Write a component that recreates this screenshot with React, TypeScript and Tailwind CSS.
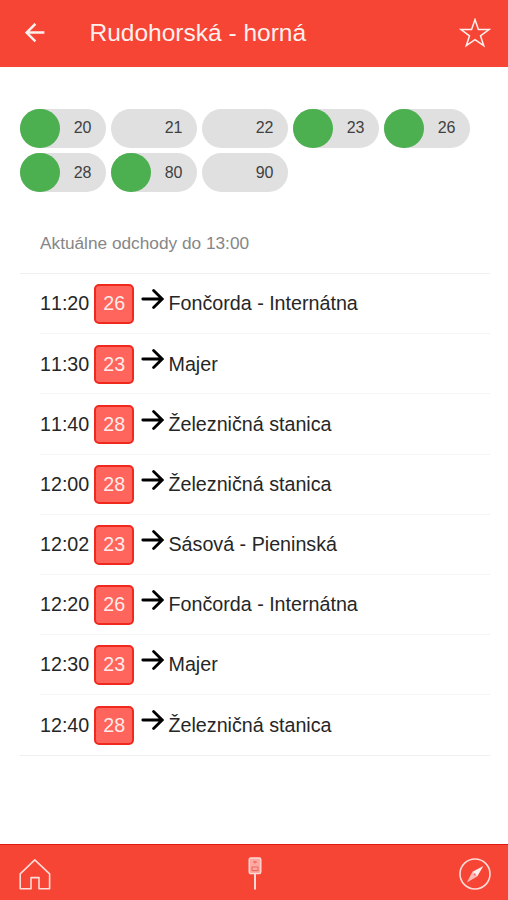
import { useState } from 'react';

interface Line {
  number: string;
  active: boolean;
}

interface Departure {
  time: string;
  line: string;
  direction: string;
}

const initialLines: Line[] = [
  { number: '20', active: true },
  { number: '21', active: false },
  { number: '22', active: false },
  { number: '23', active: true },
  { number: '26', active: true },
  { number: '28', active: true },
  { number: '80', active: true },
  { number: '90', active: false },
];

const departures: Departure[] = [
  { time: '11:20', line: '26', direction: 'Fončorda - Internátna' },
  { time: '11:30', line: '23', direction: 'Majer' },
  { time: '11:40', line: '28', direction: 'Železničná stanica' },
  { time: '12:00', line: '28', direction: 'Železničná stanica' },
  { time: '12:02', line: '23', direction: 'Sásová - Pieninská' },
  { time: '12:20', line: '26', direction: 'Fončorda - Internátna' },
  { time: '12:30', line: '23', direction: 'Majer' },
  { time: '12:40', line: '28', direction: 'Železničná stanica' },
];

const BackIcon = () => (
  <svg className="block h-5 w-5" viewBox="0 0 20 20" fill="none" stroke="currentColor" strokeWidth="2.5">
    <path d="M19.4 9.6H2M10.4 0.8L1.6 9.6l8.8 8.8" />
  </svg>
);

const StarIcon = () => (
  <svg className="block h-[30px] w-[32px]" viewBox="0 0 32 30" fill="none" stroke="currentColor" strokeWidth="1.5">
    <path d="M16 1.6l3.4 10h10.6l-8.5 6.2 3.2 9.9L16 21.6l-8.7 6.1 3.2-9.9L2 11.6h10.6z" />
  </svg>
);

const ArrowIcon = () => (
  <svg
    className="block h-[22px] w-[23px]"
    viewBox="0 0 23 22"
    fill="none"
    stroke="currentColor"
    strokeWidth="2.8"
    strokeLinecap="round"
  >
    <path d="M1.8 11h19M12.6 2.4l8.6 8.6-8.6 8.6" />
  </svg>
);

const HomeIcon = () => (
  <svg className="block h-8 w-8" viewBox="0 0 32 32" fill="none" stroke="currentColor" strokeWidth="1.6" strokeLinejoin="round">
    <path d="M1.2 30.8V15.8L15.8 1.9l14.8 13.9v15H20V19.6h-8v11.2z" />
  </svg>
);

const StopIcon = () => (
  <svg className="block h-[34px] w-[14px]" viewBox="0 0 14 34" fill="none">
    <rect x="1.2" y="1" width="11.6" height="15.6" rx="1.6" fill="#fbaaa3" stroke="#ffd8d4" strokeWidth="1.4" />
    <path d="M5 5h4M7 3.8v2.8M4 10h6v3.6H4z" stroke="#f0685e" strokeWidth="1.1" />
    <path d="M7 17v15.6" stroke="#ffe9e7" strokeWidth="1.8" />
  </svg>
);

const CompassIcon = () => (
  <svg className="block h-8 w-8" viewBox="0 0 32 32" fill="none">
    <circle cx="16" cy="16" r="15" stroke="currentColor" strokeWidth="1.6" />
    <path d="M24.4 8L13.4 13.8l4.8 4.6z" fill="#ffefed" />
    <path d="M7.8 24.6l5.6-10.8 4.8 4.6z" fill="currentColor" fillOpacity="0.8" />
    <circle cx="15.8" cy="16.4" r="1" fill="#f76b60" />
  </svg>
);

const App = () => {
  const [lines, setLines] = useState(initialLines);

  const toggleLine = (number: string) => {
    setLines(lines.map((l) => (l.number === number ? { ...l, active: !l.active } : l)));
  };

  return (
    <div className="flex h-[900px] w-[508px] flex-col overflow-hidden bg-white font-['Liberation_Sans',Arial,sans-serif] text-[#262626]">
      <header className="flex h-[66.5px] shrink-0 items-center bg-[#f64435] pl-[25px] pr-[17px] text-[#fff0ee]">
        <button aria-label="Späť">
          <BackIcon />
        </button>
        <h1 className="ml-[44.5px] flex-1 text-[24.5px] leading-none">Rudohorská - horná</h1>
        <button aria-label="Obľúbené">
          <StarIcon />
        </button>
      </header>

      <main className="flex-1 px-5 pt-[42px]">
        <div className="flex flex-wrap gap-[5px]">
          {lines.map((line) => (
            <button
              key={line.number}
              onClick={() => toggleLine(line.number)}
              className="flex h-[39.4px] w-[86px] items-center justify-between rounded-full bg-[#e0e0e0] pr-[14.5px] text-[16px] text-[#404040]"
            >
              <span className={`h-[39.4px] w-[39.6px] rounded-full ${line.active ? 'bg-[#4caf50]' : ''}`} />
              {line.number}
            </button>
          ))}
        </div>

        <h2 className="mt-[21.7px] flex h-[60.2px] w-[470px] items-center border-b border-[#f0f0f0] pl-5 pt-px text-[17.25px] text-[#868686]">
          Aktuálne odchody do 13:00
        </h2>

        <ul className="w-[470px] border-b border-[#efefef]">
          {departures.map((d) => (
            <li
              key={d.time}
              className="ml-5 flex h-[60.15px] items-center border-b border-[#f5f5f5] pt-px text-[19.7px] last:h-[59.5px] last:border-b-0"
            >
              <span className="w-[54.3px] [font-kerning:none]">{d.time}</span>
              <span className="flex h-[39.5px] w-10 items-center justify-center rounded-[5px] border-2 border-[#f0291f] bg-[#ff655c] text-[#ffece9]">
                {d.line}
              </span>
              <span className="mb-2.5 ml-[6.4px] mr-[4.8px] text-black">
                <ArrowIcon />
              </span>
              <span>{d.direction}</span>
            </li>
          ))}
        </ul>
      </main>

      <footer className="flex h-[56.5px] shrink-0 items-center justify-between border-t border-[#e2180d] bg-[#f64435] pl-[19px] pr-[17.5px] pt-1 text-[#ffdcd8]">
        <HomeIcon />
        <StopIcon />
        <CompassIcon />
      </footer>
    </div>
  );
};

export default App;
